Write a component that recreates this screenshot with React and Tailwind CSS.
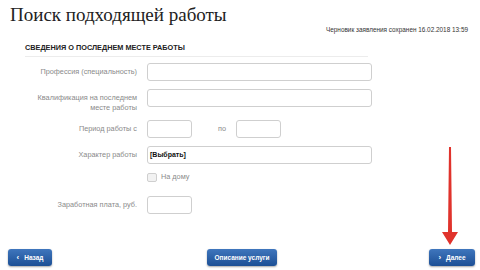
import React from "react";

const labelCls = "w-[149px] shrink-0 text-right pr-[10px] text-[7.3px] leading-[10px] text-[#8a8a8a]";
const inputCls = "h-[18px] border border-[#cfcfcf] rounded-[3px] bg-white";

function Row({ label, children, className = "", labelClass = "" }) {
  return (
    <div className={"flex items-center " + className}>
      <div className={labelCls + " " + labelClass}>{label}</div>
      {children}
    </div>
  );
}

function Btn({ children, className = "" }) {
  return (
    <button
      className={
        "h-[17px] rounded-[3px] bg-gradient-to-b from-[#3f76bd] to-[#1c4f95] shadow-[0_1px_2px_rgba(0,0,0,0.35)] text-white text-[6.5px] font-bold flex items-center justify-center " +
        className
      }
    >
      {children}
    </button>
  );
}

export default function App() {
  return (
    <div className="relative w-[480px] h-[270px] bg-white overflow-hidden" style={{ fontFamily: '"Liberation Sans", Arial, sans-serif' }}>
      <div className="pl-[10px] pt-[3px]">
        <h1 className="text-[19px] leading-[24px] text-[#222]" style={{ fontFamily: '"Liberation Serif", "Times New Roman", serif' }}>
          Поиск подходящей работы
        </h1>
      </div>
      <div className="flex justify-end pr-[12px] mt-[-1px]">
        <span className="text-[6.4px] leading-[8px] text-[#333]">Черновик заявления сохранен 16.02.2018 13:59</span>
      </div>

      <div className="ml-[25px] w-[343px] mt-[9px]">
        <div className="text-[7.3px] leading-[9px] font-bold text-[#222] pb-[4px] border-b border-[#ececec]">
          СВЕДЕНИЯ О ПОСЛЕДНЕМ МЕСТЕ РАБОТЫ
        </div>
      </div>

      <div className="ml-[-2px] mt-[6px] flex flex-col">
        <Row label="Профессия (специальность)">
          <div className={inputCls + " w-[225px]"} />
        </Row>
        <Row
          label={<>Квалификация на последнем<br />месте работы</>}
          className="mt-[8px] items-start"
          labelClass="pt-[4px]"
        >
          <div className={inputCls + " w-[225px]"} />
        </Row>
        <Row label="Период работы с" className="mt-[7px]">
          <div className={inputCls + " w-[45px]"} />
          <span className="ml-[26px] w-[18px] text-[7.3px] text-[#8a8a8a]">по</span>
          <div className={inputCls + " w-[45px]"} />
        </Row>
        <Row label="Характер работы" className="mt-[8px]">
          <div className={inputCls + " w-[225px] flex items-center pl-[2px] text-[7px] font-bold text-[#111]"}>[Выбрать]</div>
        </Row>
        <Row label="" className="mt-[8px]">
          <div className="w-[10px] h-[9px] border border-[#cfcfcf] rounded-[2px] bg-[#f2f2f2]" />
          <span className="ml-[4px] text-[7.3px] text-[#8a8a8a]">На дому</span>
        </Row>
        <Row label="Заработная плата, руб." className="mt-[13px]">
          <div className={inputCls + " w-[45px]"} />
        </Row>
      </div>

      <div className="absolute left-0 right-0 top-[249px] flex justify-between px-[8px]">
        <Btn className="w-[44px] gap-[5px]">
          <span className="text-[8px] leading-none">‹</span>Назад
        </Btn>
        <Btn className="w-[70px] ml-[3px]">Описание услуги</Btn>
        <Btn className="w-[46px] gap-[5px] mr-[-3px]">
          <span className="text-[8px] leading-none">›</span>Далее
        </Btn>
      </div>

      <svg className="absolute left-[438px] top-[145px]" width="24" height="102" viewBox="0 0 24 102">
        <polygon points="11,2 13,2 14,87 20,87 12,100 4,87 10,87" fill="#e0332c" />
      </svg>
    </div>
  );
}
